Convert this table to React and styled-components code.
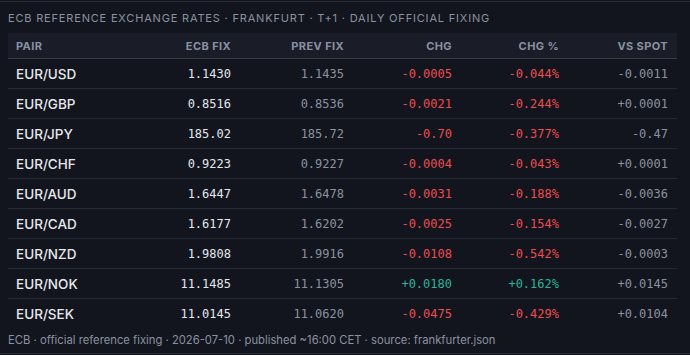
import styled, { createGlobalStyle } from "styled-components";

const rows = [
    { pair: "EUR/USD", fix: "1.1430", prev: "1.1435", chg: "-0.0005", pct: "-0.044%", spot: "-0.0011" },
    { pair: "EUR/GBP", fix: "0.8516", prev: "0.8536", chg: "-0.0021", pct: "-0.244%", spot: "+0.0001" },
    { pair: "EUR/JPY", fix: "185.02", prev: "185.72", chg: "-0.70", pct: "-0.377%", spot: "-0.47" },
    { pair: "EUR/CHF", fix: "0.9223", prev: "0.9227", chg: "-0.0004", pct: "-0.043%", spot: "+0.0001" },
    { pair: "EUR/AUD", fix: "1.6447", prev: "1.6478", chg: "-0.0031", pct: "-0.188%", spot: "-0.0036" },
    { pair: "EUR/CAD", fix: "1.6177", prev: "1.6202", chg: "-0.0025", pct: "-0.154%", spot: "-0.0027" },
    { pair: "EUR/NZD", fix: "1.9808", prev: "1.9916", chg: "-0.0108", pct: "-0.542%", spot: "-0.0003" },
    { pair: "EUR/NOK", fix: "11.1485", prev: "11.1305", chg: "+0.0180", pct: "+0.162%", spot: "+0.0145" },
    { pair: "EUR/SEK", fix: "11.0145", prev: "11.0620", chg: "-0.0475", pct: "-0.429%", spot: "+0.0104" },
];

const GlobalStyle = createGlobalStyle`
    html, body {
        margin: 0;
        padding: 0;
        background: #12151d;
    }
`

export default function App() {
    return (
        <>
            <GlobalStyle />
            <Panel>
                <Title>ECB Reference Exchange Rates · Frankfurt · T+1 · Daily Official Fixing</Title>
                <Table>
                    <HeadRow>
                        <Head>Pair</Head>
                        <Head right>ECB Fix</Head>
                        <Head right>Prev Fix</Head>
                        <Head right>Chg</Head>
                        <Head right>Chg %</Head>
                        <Head right>VS Spot</Head>
                    </HeadRow>
                    {rows.map((r) => {
                        const tone = r.chg.startsWith("+") ? "up" : "down";
                        return (
                            <Row key={r.pair}>
                                <Pair>{r.pair}</Pair>
                                <Num tone="main">{r.fix}</Num>
                                <Num tone="muted">{r.prev}</Num>
                                <Num tone={tone}>{r.chg}</Num>
                                <Num tone={tone}>{r.pct}</Num>
                                <Num tone="muted">{r.spot}</Num>
                            </Row>
                        );
                    })}
                </Table>
                <Footer>ECB · official reference fixing · 2026-07-10 · published ~16:00 CET · source: frankfurter.json</Footer>
            </Panel>
        </>
    );
}

const TONES = {
    main: "#e4e7ee",
    muted: "#8a929f",
    down: "#ec4d4f",
    up: "#2db39b",
};

const Panel = styled.div`
    margin-top: 1px;
    border-top: 1px solid #282c37;
    border-bottom: 1px solid #282c37;
    padding: 8px 0 5px 8px;
    font-family: Inter, "Liberation Sans", sans-serif;
`

const Title = styled.div`
    font-size: 11px;
    line-height: 16px;
    letter-spacing: 0.82px;
    text-transform: uppercase;
    color: #8a92a0;
    margin-bottom: 7px;
    white-space: nowrap;
`

const Table = styled.div`
    width: 669px;
`

const Grid = styled.div`
    display: grid;
    grid-template-columns: 120px 112px 113px 108px 107px 109px;
    align-items: center;
    box-sizing: border-box;
`

const HeadRow = styled(Grid)`
    height: 26px;
    background: #1a1d27;
    border-bottom: 1px solid #363b48;
`

const Head = styled.div`
    font-size: 11px;
    font-weight: 700;
    letter-spacing: 0.4px;
    text-transform: uppercase;
    color: #8891a3;
    text-align: ${(p) => (p.right ? "right" : "left")};
    padding: ${(p) => (p.right ? "0 9px 0 0" : "0 0 0 8px")};
`

const Row = styled(Grid)`
    height: 30px;
    border-bottom: 1px solid #252934;
    &:last-child {
        border-bottom: none;
    }
`

const Pair = styled.div`
    padding-left: 8px;
    font-size: 13.5px;
    font-weight: 500;
    color: #e6e8ee;
`

const Num = styled.div`
    text-align: right;
    padding-right: 9px;
    font-family: "DejaVu Sans Mono", "Liberation Mono", monospace;
    font-size: 12px;
    color: ${(p) => TONES[p.tone]};
`

const Footer = styled.div`
    margin-top: 3px;
    font-size: 11.25px;
    line-height: 16px;
    color: #8a92a0;
`
